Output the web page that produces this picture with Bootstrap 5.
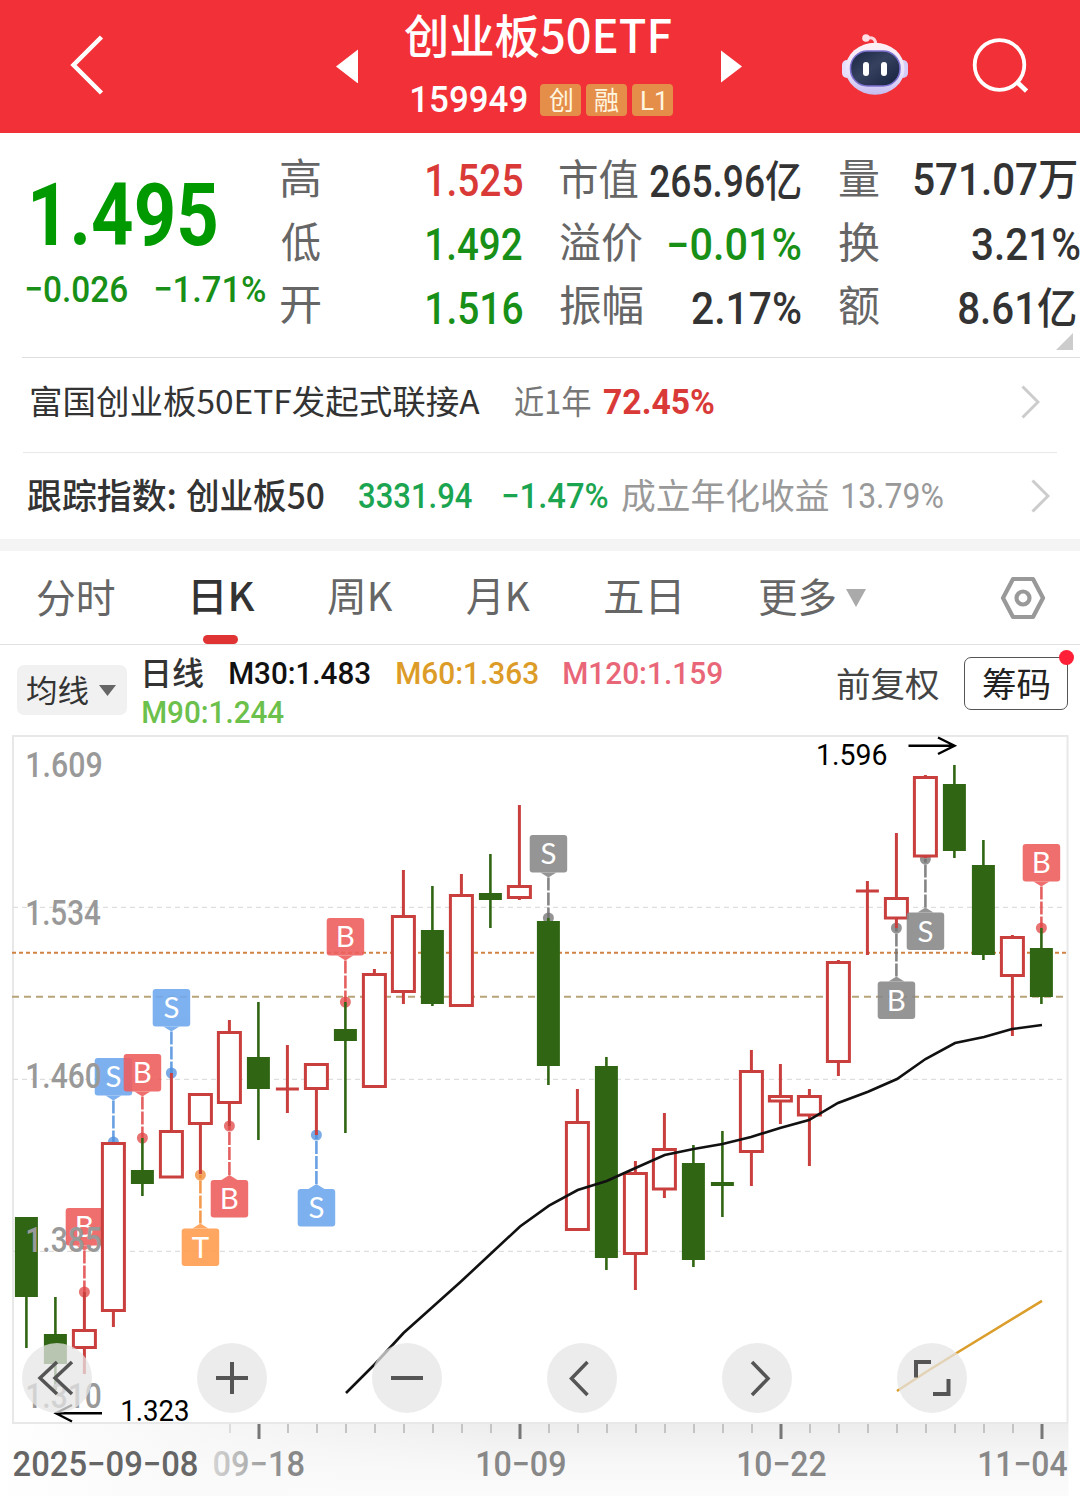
<!DOCTYPE html>
<html lang="zh-CN">
<head>
<meta charset="utf-8">
<meta name="viewport" content="width=device-width, initial-scale=1">
<title>创业板50ETF 159949</title>
<link rel="stylesheet" href="https://cdn.jsdelivr.net/npm/bootstrap@5.3.0/dist/css/bootstrap.min.css">
<style>
body{width:1080px;height:1496px;overflow:hidden;background:#fff;color:#333;font-family:Roboto,"Noto Sans CJK SC",sans-serif}
.fit{display:block;flex:none;line-height:1;white-space:nowrap}
.fit>span{display:block;width:max-content;transform-origin:0 0}
svg{display:block;flex:none}
.cjk{font-family:"Noto Sans CJK SC",sans-serif}
.w5{font-weight:500}.w7{font-weight:700}
.g0{color:#009900}.g1{color:#189018}.g2{color:#1ba551}.r1{color:#d93a38}.k3{color:#333}.k6{color:#666}.k7{color:#777}.k9{color:#999}
.topbar{height:133px;background:#f23037;color:#fff;padding:0 0 3px 70px}
.f-title{font-size:46px}.f-code{font-size:37.5px}
.titlebox{width:268px;margin:0 47px 0 46px;padding-top:14px}
.coderow{margin-top:25px;height:32px;padding-left:7px;gap:5px}
.coderow .f-code{margin-right:8px}
.tagx{height:32px;background:#e58e4a;border-radius:4px;color:#fff6e0;font-size:26px;width:42px}
.backgap{margin-right:231px}.botgap{margin-left:97px}.findgap{margin-left:63px}
.quote{height:224px;padding-top:15px}
.price{width:281px;padding:35px 0 0 26px}
.price>.fit{margin-left:7px}
.f-big{font-size:86.5px}.f-chg{font-size:37.5px}
.chg{margin-top:30px;gap:28px}
.qcols{gap:38px}
.qcol{width:241px}
.qrow{height:63.7px}
.f-lab{font-size:42px;margin-top:-3px}.f-val{font-size:43.5px;margin-top:1px}
.corner{position:absolute;right:7px;bottom:7px}
.hr1{height:1px;background:#dedede;margin-left:22px}
.hr2{height:1px;background:#e9e9e9;margin:0 23px}
.linkA{height:94px;padding:0 40px 7px 31px}.linkB{height:86px;padding:0 30px 1px 27.5px}
.f-a{font-size:33px}.f-b{font-size:35px}
.band{height:12px;background:#f4f4f4}
.tabsx{height:93px;border-bottom:1px solid #e2e2e2;box-sizing:content-box;padding-left:37px;font-size:40px}
.tabsx>*{position:relative}
.underbar{position:absolute;left:10px;bottom:-29px;width:35px;height:9px;border-radius:5px;background:#e03434}
.legendx{height:85px;padding:12px 0 0 17px}
.pillx{width:110px;height:50px;background:#f1f1f1;border-radius:7px;margin-top:8px;padding-left:10px;gap:11px}
.malines{width:580px;margin-left:16px}
.f-ma{font-size:32px}
.chip{width:104px;height:53px;border:1.5px solid #555;border-radius:7px;position:relative;font-size:34px}
.reddot{position:absolute;width:15px;height:15px;border-radius:50%;background:#ff1f36;right:-7px;top:-8px}
.chartbox{height:766px}
.tools{position:absolute;left:22px;top:613px;gap:105px}
.toolbtn{width:70px;height:70px;border-radius:50%;background:rgba(230,230,230,.75)}
</style>
</head>
<body>
<header class="topbar d-flex align-items-center">
  <svg class="backgap" width="34" height="60" viewBox="70 35 34 60"><path d="M101.500 37 L73.500 65 L101.500 93" fill="none" stroke="#fff" stroke-width="4.500"/></svg>
  <svg width="24" height="36" viewBox="335 47 24 36"><path d="M336 66.500L358 49.500V83.500Z" fill="#fff"/></svg>
  <div class="titlebox align-self-start">
    <h1 class="fit cjk w5 f-title m-0" data-w="266">创业板50ETF</h1>
    <div class="coderow d-flex align-items-center">
      <div class="fit w5 f-code" data-w="115">159949</div>
      <div class="tagx d-flex align-items-center justify-content-center"><div class="fit" data-w="23">创</div></div>
      <div class="tagx d-flex align-items-center justify-content-center"><div class="fit" data-w="24">融</div></div>
      <div class="tagx d-flex align-items-center justify-content-center"><div class="fit" data-w="22">L1</div></div>
    </div>
  </div>
  <svg width="24" height="36" viewBox="720 47 24 36"><path d="M721 50.500L742 66.500L721 82.500Z" fill="#fff"/></svg>
  <svg class="botgap" width="68" height="66" viewBox="841 32 68 66">
    <defs><linearGradient id="shell" x1="0" y1="0" x2="0" y2="1"><stop offset="0" stop-color="#fff0f4"/><stop offset=".6" stop-color="#e8e2fb"/><stop offset="1" stop-color="#c5bbf0"/></linearGradient>
    <linearGradient id="visor" x1="0" y1="0" x2="1" y2="1"><stop offset="0" stop-color="#1b2644"/><stop offset=".45" stop-color="#35415f"/><stop offset="1" stop-color="#16203f"/></linearGradient></defs>
    <path d="M867 38Q875.500 36 876 45" fill="none" stroke="#ffd5dc" stroke-width="3"/><circle cx="866" cy="38" r="3.800" fill="#ffdfe5"/>
    <rect x="842" y="60" width="10" height="18" rx="5" fill="#e6dffb"/><rect x="898" y="60" width="10" height="18" rx="5" fill="#d5cdf8"/>
    <ellipse cx="875" cy="68.700" rx="29.500" ry="26" fill="url(#shell)"/>
    <rect x="850.500" y="51" width="49.500" height="35" rx="17" fill="url(#visor)" stroke="#7c70cf" stroke-width="1.500"/>
    <rect x="863" y="62" width="6" height="14" rx="3" fill="#fff"/><rect x="881" y="62" width="6" height="14" rx="3" fill="#fff"/>
  </svg>
  <svg class="findgap" width="56" height="60" viewBox="972 35.500 56 60"><circle cx="999.500" cy="65.500" r="24.800" fill="none" stroke="#fff" stroke-width="3.800"/><path d="M1017 82.500L1026.500 91.500" stroke="#fff" stroke-width="4.500"/></svg>
</header>

<section class="quote d-flex position-relative">
  <div class="price">
    <div class="fit w7 g0 f-big" data-w="183.500">1.495</div>
    <div class="chg d-flex">
      <div class="fit w5 g1 f-chg" data-w="101">−0.026</div><div class="fit w5 g1 f-chg" data-w="110">−1.71%</div>
    </div>
  </div>
  <div class="qcols d-flex">
    <div class="qcol">
      <div class="qrow d-flex align-items-center justify-content-between"><div class="fit k6 f-lab" data-w="39">高</div><div class="fit w5 r1 f-val" data-w="95">1.525</div></div>
      <div class="qrow d-flex align-items-center justify-content-between"><div class="fit k6 f-lab" data-w="39">低</div><div class="fit w5 g1 f-val" data-w="95">1.492</div></div>
      <div class="qrow d-flex align-items-center justify-content-between"><div class="fit k6 f-lab" data-w="39">开</div><div class="fit w5 g1 f-val" data-w="95">1.516</div></div>
    </div>
    <div class="qcol">
      <div class="qrow d-flex align-items-center justify-content-between"><div class="fit k6 f-lab" data-w="78">市值</div><div class="fit w5 k3 f-val" data-w="151">265.96亿</div></div>
      <div class="qrow d-flex align-items-center justify-content-between"><div class="fit k6 f-lab" data-w="82">溢价</div><div class="fit w5 g1 f-val" data-w="132">−0.01%</div></div>
      <div class="qrow d-flex align-items-center justify-content-between"><div class="fit k6 f-lab" data-w="82">振幅</div><div class="fit w5 k3 f-val" data-w="109">2.17%</div></div>
    </div>
    <div class="qcol">
      <div class="qrow d-flex align-items-center justify-content-between"><div class="fit k6 f-lab" data-w="40">量</div><div class="fit w5 k3 f-val me-1" data-w="162">571.07万</div></div>
      <div class="qrow d-flex align-items-center justify-content-between"><div class="fit k6 f-lab" data-w="40">换</div><div class="fit w5 k3 f-val" data-w="108">3.21%</div></div>
      <div class="qrow d-flex align-items-center justify-content-between"><div class="fit k6 f-lab" data-w="40">额</div><div class="fit w5 k3 f-val me-1" data-w="117">8.61亿</div></div>
    </div>
  </div>
  <svg class="corner" width="17" height="17"><path d="M17 0V17H0Z" fill="#ccc"/></svg>
</section>
<div class="hr1"></div>
<section class="linkA d-flex align-items-center">
  <div class="fit cjk k3 f-a" data-w="448.500">富国创业板50ETF发起式联接A</div>
  <div class="fit cjk k7 f-a" data-w="75.500" data-ml="35.300">近1年</div>
  <div class="fit w7 r1 f-b" data-w="110" data-ml="14">72.45%</div>
  <svg class="ms-auto" width="19" height="34"><path d="M1.500 1.500L17 17L1.500 32.500" fill="none" stroke="#ccc" stroke-width="3"/></svg>
</section>
<div class="hr2"></div>
<section class="linkB d-flex align-items-center">
  <div class="fit cjk w5 k3 f-b" data-w="146.500">跟踪指数:</div>
  <div class="fit cjk w5 k3 f-b" data-w="138" data-ml="12">创业板50</div>
  <div class="fit w5 g2 f-b" data-w="113.500" data-ml="35">3331.94</div>
  <div class="fit w5 g2 f-b" data-w="105" data-ml="30.500">−1.47%</div>
  <div class="fit cjk k9 f-b" data-w="206.600" data-ml="14">成立年化收益</div>
  <div class="fit k9 f-b" data-w="101.300" data-ml="13.700">13.79%</div>
  <svg class="ms-auto" width="19" height="34"><path d="M1.500 1.500L17 17L1.500 32.500" fill="none" stroke="#ccc" stroke-width="3"/></svg>
</section>
<div class="band"></div>

<nav class="tabsx d-flex align-items-center">
  <div class="fit k6" data-w="77.700">分时</div>
  <div data-ml="78.300"><div class="fit cjk w5 k3" data-w="62">日K</div><i class="underbar"></i></div>
  <div class="fit cjk k6" data-w="64.500" data-ml="73">周K</div>
  <div class="fit cjk k6" data-w="63" data-ml="74.500">月K</div>
  <div class="fit k6" data-w="74.500" data-ml="75">五日</div>
  <div class="fit k6" data-w="76" data-ml="80">更多</div>
  <svg data-ml="10.500" width="20" height="18"><path d="M0 0H20L10 18Z" fill="#aaa"/></svg>
  <svg data-ml="134" width="46" height="44" viewBox="1000 576 46 44"><path d="M1013 579H1033L1043 598L1033 617H1013L1003 598Z" fill="none" stroke="#999" stroke-width="4.200" stroke-linejoin="round"/><circle cx="1023" cy="598" r="6.500" fill="none" stroke="#999" stroke-width="4.200"/></svg>
</nav>

<section class="legendx d-flex align-items-start">
  <div class="pillx d-flex align-items-center"><div class="fit k3" style="font-size:31px" data-w="61">均线</div><svg width="17" height="11"><path d="M0 0H17L8.500 11Z" fill="#666"/></svg></div>
  <div class="malines">
    <div class="d-flex align-items-center">
      <div class="fit k3 w5 f-ma" data-w="58" data-ml="2">日线</div>
      <div class="fit w5 f-ma" style="color:#111" data-w="140" data-ml="27">M30:1.483</div>
      <div class="fit w5 f-ma" style="color:#dc9c27" data-w="141" data-ml="27">M60:1.363</div>
      <div class="fit w5 f-ma" style="color:#e96678" data-w="158" data-ml="25.500">M120:1.159</div>
    </div>
    <div class="fit w5 f-ma" style="color:#6cc04c;margin-top:12px" data-w="141">M90:1.244</div>
  </div>
  <div class="fit" style="font-size:34px;color:#444;margin-top:10px" data-w="101.600" data-ml="114">前复权</div>
  <div class="chip d-flex align-items-center justify-content-center" data-ml="25.500"><div class="fit" style="color:#222" data-w="66">筹码</div><i class="reddot"></i></div>
</section>

<main class="chartbox position-relative">
  <svg id="kline" width="1080" height="766" viewBox="0 730 1080 766"></svg>
  <div class="tools d-flex">
    <div class="toolbtn"><svg width="70" height="70" fill="none" stroke="#555" stroke-width="3.500"><path d="M35 19L18 35L35 51M50 19L33 35L50 51"/></svg></div>
    <div class="toolbtn"><svg width="70" height="70" fill="none" stroke="#555" stroke-width="4"><path d="M19 35H51M35 19V51"/></svg></div>
    <div class="toolbtn"><svg width="70" height="70" fill="none" stroke="#555" stroke-width="4"><path d="M19 35H51"/></svg></div>
    <div class="toolbtn"><svg width="70" height="70" fill="none" stroke="#555" stroke-width="3.500"><path d="M40.500 19L24.500 35.500L40.500 52"/></svg></div>
    <div class="toolbtn"><svg width="70" height="70" fill="none" stroke="#555" stroke-width="3.500"><path d="M30 19L46 35.500L30 52"/></svg></div>
    <div class="toolbtn"><svg width="70" height="70" fill="none" stroke="#555" stroke-width="4"><path d="M34 19H19V34.500M51.500 36V51H36"/></svg></div>
  </div>
</main>

<script src="https://cdn.jsdelivr.net/npm/bootstrap@5.3.0/dist/js/bootstrap.bundle.min.js"></script>
<script>
const ctx = document.createElement('canvas').getContext('2d');
function ink(text, font){
  ctx.font = font;
  const m = ctx.measureText(text);
  return {l:m.actualBoundingBoxLeft, w:m.actualBoundingBoxLeft + m.actualBoundingBoxRight, a:m.actualBoundingBoxAscent,
          d:m.actualBoundingBoxDescent, fa:m.fontBoundingBoxAscent, fd:m.fontBoundingBoxDescent};
}
document.querySelectorAll('[data-ml]').forEach(e => e.style.marginLeft = e.dataset.ml + 'px');
document.querySelectorAll('.fit').forEach(e => {
  const cs = getComputedStyle(e), fs = parseFloat(cs.fontSize), t = e.textContent;
  const k = ink(t, `${cs.fontWeight} ${fs}px ${cs.fontFamily}`), s = e.dataset.w / k.w;
  const span = document.createElement('span');
  span.textContent = t; e.textContent = ''; e.appendChild(span);
  e.style.width = e.dataset.w + 'px';
  e.style.height = (k.a + k.d) + 'px';
  span.style.transform = `translate(${k.l*s}px,${k.a - (fs + k.fa - k.fd)/2}px) scaleX(${s})`;
});

let out = '';
const X = i => 26.4 + 29*i;
const RED = '#c93f3d', GREEN = '#306613';
const line = (x1,y1,x2,y2,c,w,x='') => out += `<line x1="${x1}" y1="${y1}" x2="${x2}" y2="${y2}" stroke="${c}" stroke-width="${w}" ${x}/>`;
function label(t, x0, x1, base, size, weight, fill){
  const k = ink(t, `${weight} ${size}px Roboto`), s = (x1-x0)/k.w;
  out += `<text transform="translate(${x0 + k.l*s} ${base}) scale(${s} 1)" font-family="Roboto" font-size="${size}" font-weight="${weight}" fill="${fill}">${t}</text>`;
}
out += `<defs><linearGradient id="axisY" x1="0" y1="0" x2="0" y2="1"><stop offset="0" stop-color="#ededed"/><stop offset=".6" stop-color="#f8f8f8"/><stop offset="1" stop-color="#fbfbfb"/></linearGradient>
<linearGradient id="axisX" x1="0" y1="0" x2="1" y2="0"><stop offset="0" stop-color="#fff"/><stop offset=".35" stop-color="#fafafa" stop-opacity=".8"/><stop offset="1" stop-color="#fafafa" stop-opacity="0"/></linearGradient>
<linearGradient id="fade" gradientUnits="userSpaceOnUse" x1="0" y1="0" x2="80" y2="0"><stop offset="0" stop-color="#d4d4d4"/><stop offset="1" stop-color="#888"/></linearGradient></defs>`;
out += `<rect x="0" y="1424" width="1080" height="72" fill="url(#axisY)"/><rect x="0" y="1424" width="500" height="72" fill="url(#axisX)"/><rect x="1068.500" y="1424" width="12" height="72" fill="#fff"/>`;
out += `<rect x="13" y="736" width="1054.500" height="687" fill="none" stroke="#e8e8e8" stroke-width="2"/>`;
[907.3,1079.4,1251.4].forEach(y => line(13,y,1066,y,'#dedede',1.2,'stroke-dasharray="5 4"'));
line(12,952.8,1066,952.8,'#cf8242',2,'stroke-dasharray="4 3"');
line(12,996.8,1066,996.8,'#b8a478',2,'stroke-dasharray="7 5"');

// [high, bodyTop, bodyBottom, low, up]
const K = [[1217,1217,1297,1348,0],[1297,1334,1364,1390,0],[1292,1329,1349,1374,1],[1142,1142,1312,1327,1],[1138,1170,1184,1196,0],
[1073,1130,1178.5,1178,1],[1093,1093,1125,1174,1],[1020,1031,1104,1126,1],[1002,1057,1089,1140,0],[1045,1087.5,1090.5,1113,2],
[1063,1063,1090,1135,1],[1002,1029,1041,1133,0],[969,973,1088,1088,1],[870,915,993,1004,1],[886,930,1004,1006,0],
[874,894,1007,1007,1],[854,893,900,928,0],[805,885,899,900,1],[918,921,1066,1085,0],[1089,1121,1231,1231,1],
[1057,1066,1258,1270,0],[1161,1172,1255,1290,1],[1113,1148,1190.5,1198,1],[1145,1163,1260,1267,0],[1131,1182,1186,1217,0],
[1050,1070,1153,1186,1],[1064,1095,1102.5,1124,1],[1089,1095,1116.5,1166,1],[960,961,1063,1076,1],[881,889.5,892.5,955,2],
[833,897,919.5,928,1],[775,776,857.5,858,1],[765,784,851,858,0],[840,865,955,960,0],[935,936,977,1036,1],[928,948,997,1004,0]];
const C = {r:['#ee5f5f','#e04444'], b:['#70a8ee','#4d8fdd'], o:['#ff9e50','#f08a30'], g:['#8a8a8a','#707070']};
// index: [letter, colour, box top, anchor]
const M = {2:['B','r',1208,1292],3:['S','b',1058,1142],4:['B','r',1054,1138],5:['S','b',989,1073],6:['T','o',1228.5,1175],
7:['B','r',1180,1126],10:['S','b',1189,1135],11:['B','r',918,1002],18:['S','g',835,918],30:['B','g',981.5,928],31:['S','g',912.5,859],35:['B','r',844,928]};
function marker(i){
  const [t,c,top,dot] = M[i], x = X(i), up = top < dot, e = up ? top+37.5 : top, d = up ? 5 : -5;
  line(x,e+d,x,dot,C[c][1],2.6,'stroke-dasharray="13 2" stroke-opacity=".85"');
  out += `<circle cx="${x}" cy="${dot}" r="5.500" fill="${C[c][1]}" fill-opacity=".75"/>`;
  out += `<g opacity=".9"><rect x="${x-18.7}" y="${top}" width="37.500" height="37.500" rx="3" fill="${C[c][0]}"/><path d="M${x-8} ${e}h16l-8 ${d}z" fill="${C[c][0]}"/></g>`;
  out += `<text x="${x}" y="${top+29}" text-anchor="middle" font-family="Lato" font-size="29.500" fill="#fff">${t}</text>`;
}
K.forEach(([h,a,b,l,u], i) => {
  if (M[i]) marker(i);
  const x = X(i);
  if (u === 1){
    if (h < a) line(x,h,x,a+1,RED,3);
    if (l > b) line(x,b-1,x,l,RED,3);
    out += `<rect x="${x-11}" y="${a+1.5}" width="22" height="${b-a-3}" fill="#fff" stroke="${RED}" stroke-width="3"/>`;
  } else {
    line(x,h,x,l,u ? RED : GREEN,u ? 3 : 2.6);
    out += `<rect x="${x-11.5}" y="${a}" width="23" height="${b-a}" fill="${u ? RED : GREEN}"/>`;
  }
});
out += `<polyline fill="none" stroke="#111" stroke-width="2.600" points="346,1393 375,1364 403.500,1333 432,1307.500 461,1281.500 491,1253.500 520,1226.500 549,1205.700 577.700,1190 606.700,1181 635.500,1168 664.700,1155 693.600,1149 722.500,1144 751,1137 780,1128 809,1120 838,1103 868,1091.700 897,1079 925.500,1059 955,1043 984,1037 1012,1029 1042,1025"/>`;
out += `<polyline fill="none" stroke="#db9d2b" stroke-width="2.600" points="897,1391 926,1372 955,1354 1042,1300.800"/>`;
[['1.609',777],['1.534',925],['1.460',1088],['1.385',1252],['1.310',1408]].forEach(([t,y]) => label(t,27,101,y,35,500,'#999'));
label('1.596',818,887,765,29.5,400,'#000');
label('1.323',122,188,1420.7,29.5,400,'#000');
out += `<path d="M908.500 745.700H955M938 737.500L954.500 745.700L938 754" fill="none" stroke="#000" stroke-width="2.400"/><path d="M102 1413.300H56M72 1405L56 1413.300L72 1421.500" fill="none" stroke="#000" stroke-width="2.400"/>`;
for (let i = 7; i < 36; i++){
  const major = [8,17,26,35].includes(i);
  line(X(i)+.6,1424,X(i)+.6,major ? 1439 : 1433, major ? '#777' : (i === 7 ? '#ddd' : '#c4c4c4'), major ? 3 : 2);
}
label('2025−09−08',13.5,197,1476,34.5,500,'#666');
label('09−18',213.5,303.5,1476,34.5,500,'url(#fade)');
label('10−09',477,565,1476,34.5,500,'#888');
label('10−22',738,826,1476,34.5,500,'#888');
label('11−04',979,1067,1476,34.5,500,'#888');
document.getElementById('kline').innerHTML = out;
</script>
</body>
</html>
